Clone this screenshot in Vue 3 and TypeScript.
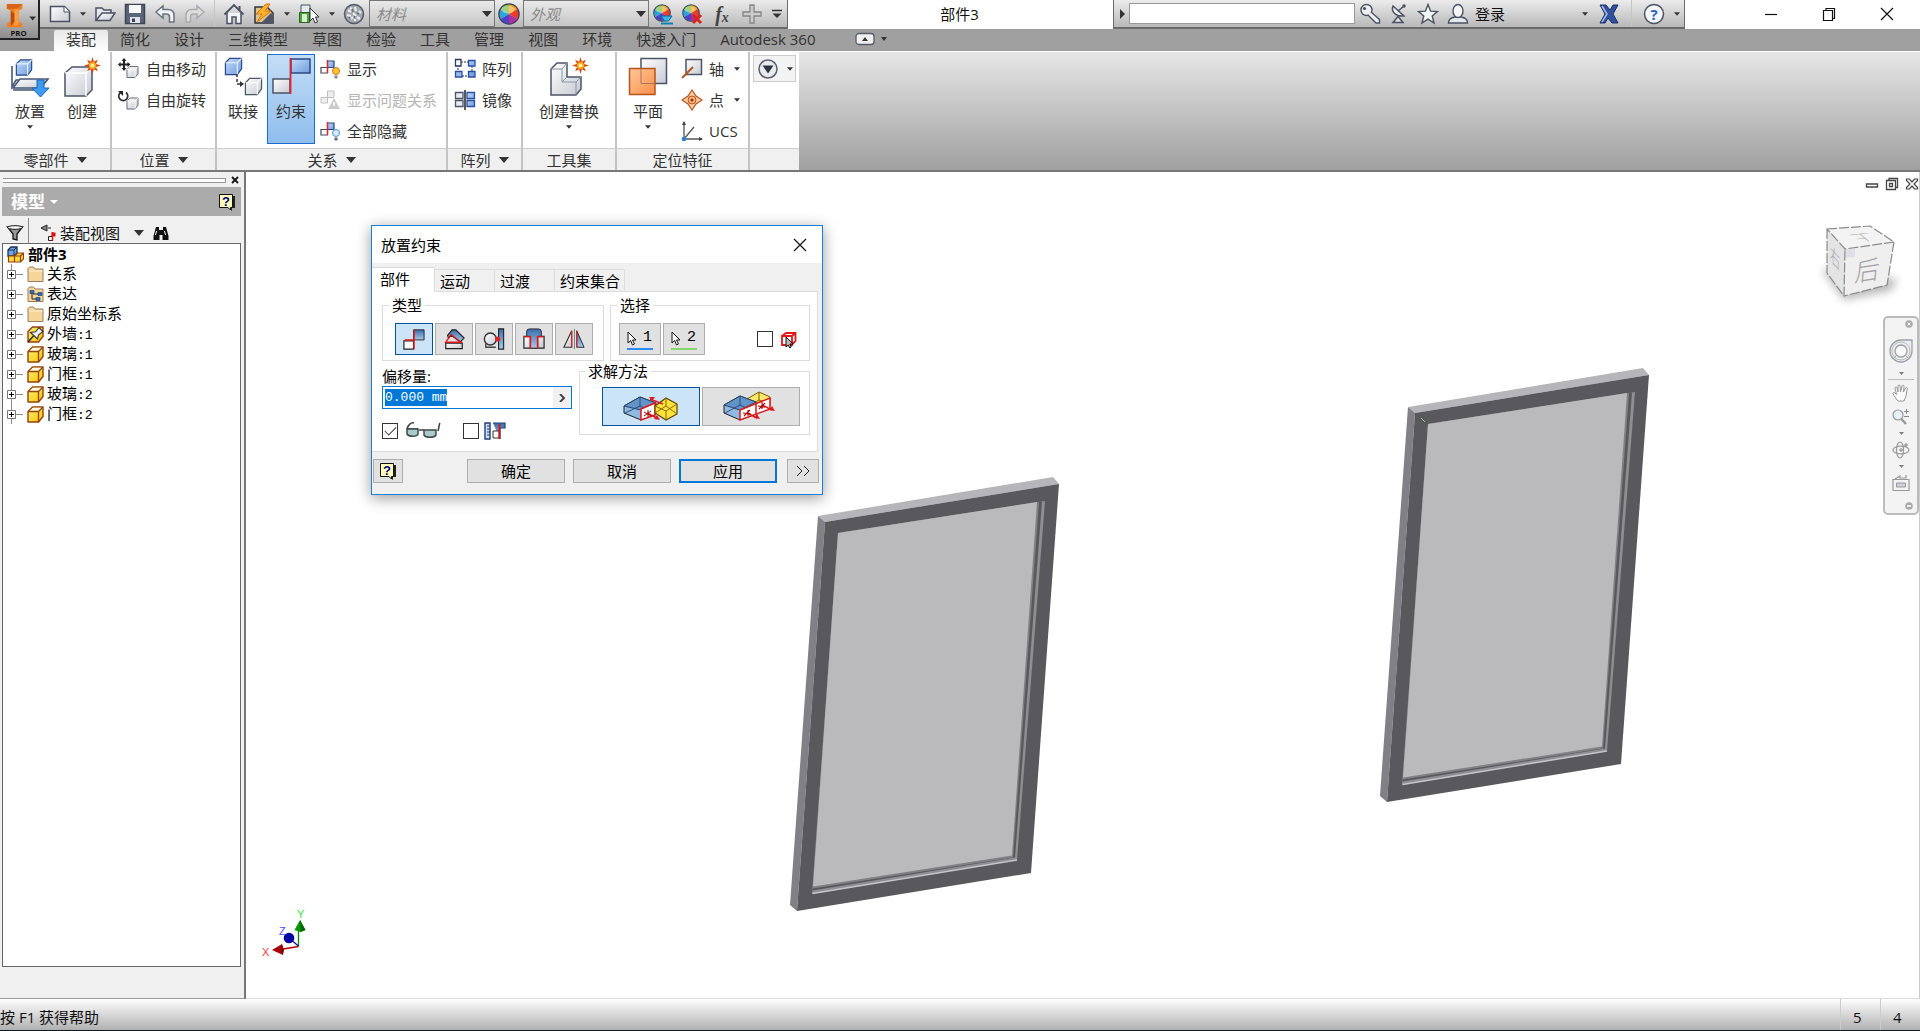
<script setup lang="ts">
import { onMounted, ref } from 'vue'

interface TreeNode { icon: string; name: string; count: string }

const ribbonTabs: string[] = ['装配', '简化', '设计', '三维模型', '草图', '检验', '工具', '管理', '视图', '环境', '快速入门', 'Autodesk 360']
const activeRibbon = ref<string>('装配')

const tree: TreeNode[] = [
  { icon: 'folder', name: '关系', count: '' },
  { icon: 'views', name: '表达', count: '' },
  { icon: 'folder', name: '原始坐标系', count: '' },
  { icon: 'pinned', name: '外墙', count: ':1' },
  { icon: 'part', name: '玻璃', count: ':1' },
  { icon: 'part', name: '门框', count: ':1' },
  { icon: 'part', name: '玻璃', count: ':2' },
  { icon: 'part', name: '门框', count: ':2' },
]

const dialogTabs: string[] = ['部件', '运动', '过渡', '约束集合']
const activeDialogTab = ref<string>('部件')

const types = [
  { id: 'mate', label: '配合' },
  { id: 'angle', label: '角度' },
  { id: 'tangent', label: '相切' },
  { id: 'insert', label: '插入' },
  { id: 'symmetry', label: '对称' },
]
const activeType = ref<string>('mate')
const solution = ref<string>('opposed')
const preview = ref<boolean>(true)
const predict = ref<boolean>(false)
const pickFirst = ref<boolean>(false)
const offset = ref<string>('0.000 mm')
const offsetInput = ref<HTMLInputElement | null>(null)

onMounted(() => {
  offsetInput.value?.focus()
  offsetInput.value?.select()
})
</script>

<template>
  <div class="app">
    <svg class="defs" width="0" height="0" aria-hidden="true">
      <defs>
        <linearGradient id="gb" x1="0" y1="0" x2="1" y2="1"><stop offset="0" stop-color="#c3dcf8" /><stop offset="1" stop-color="#6f9be0" /></linearGradient>
        <linearGradient id="gw" x1="0" y1="0" x2="1" y2="1"><stop offset="0" stop-color="#ffffff" /><stop offset="1" stop-color="#c6cad2" /></linearGradient>
        <linearGradient id="gy" x1="0" y1="0" x2="1" y2="1"><stop offset="0" stop-color="#fff27a" /><stop offset="1" stop-color="#f5c400" /></linearGradient>
        <linearGradient id="go" x1="0" y1="0" x2="1" y2="1"><stop offset="0" stop-color="#ffc79a" /><stop offset="1" stop-color="#f98f48" /></linearGradient>
        <linearGradient id="gd" x1="0" y1="0" x2="0" y2="1"><stop offset="0" stop-color="#3a6dad" /><stop offset="1" stop-color="#a9c9ea" /></linearGradient>
        <symbol id="down" viewBox="0 0 10 6"><path d="M0 0h10L5 6z" fill="#333" /></symbol>
        <symbol id="wheel" viewBox="-10 -10 20 20">
          <path d="M0 0V-9A9 9 0 0 1 7.8-4.5z" fill="#f6a01c" /><path d="M0 0L7.8-4.5A9 9 0 0 1 7.8 4.5z" fill="#ec3b23" />
          <path d="M0 0L7.8 4.5A9 9 0 0 1 0 9z" fill="#b02fa0" /><path d="M0 0V9A9 9 0 0 1-7.8 4.5z" fill="#4a43c8" />
          <path d="M0 0L-7.8 4.5A9 9 0 0 1-7.8-4.5z" fill="#2aa5d8" /><path d="M0 0L-7.8-4.5A9 9 0 0 1 0-9z" fill="#74bb36" />
          <circle r="9.2" fill="none" stroke="#3f4460" stroke-width="1.2" /><ellipse cx="-1" cy="-4" rx="6" ry="3.6" fill="#fff" opacity=".35" />
        </symbol>
        <symbol id="burst" viewBox="-8 -8 16 16">
          <path d="M0-8l1.3 4.5L5-5.5 3.3-1.5 8 0 3.3 1.5 5 5.5 1.3 3.5 0 8l-1.3-4.5L-5 5.5-3.3 1.5-8 0l4.7-1.5L-5-5.5l3.7 2z" fill="#d8480c" /><circle r="3.4" fill="#ffb01c" /><circle r="1.7" fill="#fff6b0" />
        </symbol>
        <symbol id="cubeb" viewBox="0 0 20 20"><path d="M1.5 6L6 1.5h12.5v11L14 18.5H1.5z" fill="url(#gb)" stroke="#2b4a86" stroke-width="1.3" /><path d="M1.5 6H14v12.5M14 6l4.5-4.5" fill="none" stroke="#eaf3ff" stroke-width="1.2" /></symbol>
        <symbol id="cubew" viewBox="0 0 20 20"><path d="M1.5 6L6 1.5h12.5v11L14 18.5H1.5z" fill="url(#gw)" stroke="#4b5468" stroke-width="1.3" /><path d="M1.5 6H14v12.5M14 6l4.5-4.5" fill="none" stroke="#fff" stroke-width="1.2" /></symbol>
        <symbol id="part" viewBox="0 0 17 17"><path d="M1 5.500L5.500 1H16v9.500L11.500 16H1z" fill="url(#gy)" stroke="#93420c" stroke-width="1.4" stroke-linejoin="round" /><path d="M2 5.500L6 1.700h9.300L11.300 5.500z" fill="#fffbe0" /><path d="M1 5.500h10.500V16M11.500 5.500L16 1" fill="none" stroke="#93420c" stroke-width="1.3" /></symbol>
        <symbol id="folder" viewBox="0 0 17 17"><path d="M1 15.500V2.500L2.500 1h4L8 3h8v12.500z" fill="#f6d49a" stroke="#96805a" /><path d="M2 5h13.500" stroke="#fff0cd" /></symbol>
        <symbol id="views" viewBox="0 0 17 17"><path d="M1 15.500V2.500L2.500 1h4L8 3h8v12.500z" fill="#f6d49a" stroke="#96805a" /><path d="M5 7v6h4M6 8h6" stroke="#222" fill="none" /><path d="M3 4.500h4v3H3zM11 6.500h4v3h-4zM9 11.500h4v3H9z" fill="#2b6cb8" stroke="#12386b" stroke-width=".6" /></symbol>
        <symbol id="pinned" viewBox="0 0 17 17"><path d="M1 5.500L5.500 1H16v9.500L11.500 16H1z" fill="url(#gy)" stroke="#93420c" stroke-width="1.4" /><path d="M1 16l5.500-6" stroke="#222" stroke-width="1.400" /><path d="M3.500 6.500l7 6.500 1-4 4.500-3.500L12 1.500 8.500 5.800z" fill="#f0f0f0" stroke="#333" stroke-width="1.100" /></symbol>
        <symbol id="flag" viewBox="0 0 22 22"><path d="M8.500 3H15v6.500H8.500z" fill="url(#gb)" stroke="#2b4a86" stroke-width="1.200" /><path d="M2 9.500h6.500V15H2z" fill="#fff" stroke="#414a60" stroke-width="1.200" /><path d="M8.500 2v13" stroke="#e22" stroke-width="1.400" /></symbol>
        <symbol id="help" viewBox="0 0 18 18"><path d="M3 3h14v12h-3v3l-3-3H3z" fill="#222" /><path d="M1.500 1.500h13v13h-2v2.500l-2.500-2.500H1.500z" fill="#ffffb8" stroke="#111" /><text x="8" y="13" text-anchor="middle" font-family="Liberation Sans, sans-serif" font-size="13" font-weight="700" fill="#00008b">?</text></symbol>
        <symbol id="cursor" viewBox="0 0 10 15"><path d="M1 1v11l2.700-2.500L5.500 14l2-1-2-4H9z" fill="#fff" stroke="#111" /></symbol>
        <symbol id="mate" viewBox="0 0 24 24"><path d="M11.500 2H23v11H11.500z" fill="url(#gd)" stroke="#222" /><path d="M1 14h10.500v9H1z" fill="#fff" stroke="#222" stroke-width="1.300" /><path d="M12 2v21M12 13H2" stroke="#e01818" stroke-width="1.600" /></symbol>
        <symbol id="angle" viewBox="0 0 24 24"><path d="M3 16.500h18v6H3z" fill="url(#gw)" stroke="#222" stroke-width="1.300" /><path d="M5 8l5-6h4l9 9-4 4L9 8l-3 3z" fill="url(#gd)" stroke="#222" stroke-width="1.300" /><path d="M9 7L3 15.500h18" fill="none" stroke="#e01818" stroke-width="1.500" /><path d="M9 7l9 8" stroke="#e01818" stroke-width="1.400" /></symbol>
        <symbol id="tangent" viewBox="0 0 24 24"><path d="M17 1h5.500v22H17z" fill="url(#gd)" stroke="#222" stroke-width="1.200" /><path d="M3 17v4h11" fill="none" stroke="#444" stroke-width="1.500" /><circle cx="8" cy="12" r="6.500" fill="url(#gw)" stroke="#333" stroke-width="1.500" /><circle cx="16" cy="12" r="2.800" fill="#e62020" /></symbol>
        <symbol id="insert" viewBox="0 0 24 24"><path d="M1 9h22v13H1z" fill="url(#gw)" stroke="#222" stroke-width="1.300" /><path d="M4 4q0-3 3-3h10q3 0 3 3v5h-4v13H8V9H4z" fill="url(#gd)" stroke="#222" /><path d="M2 9.500h6V22M22 9.500h-6V22" fill="none" stroke="#e01818" stroke-width="1.800" /></symbol>
        <symbol id="symmetry" viewBox="0 0 24 24"><path d="M9.500 3v18H1z" fill="url(#gw)" stroke="#333" stroke-width="1.200" /><path d="M15 3v18h8z" fill="url(#gd)" stroke="#222" /><path d="M12.500 1v22" stroke="#777" /><path d="M9.500 3v18M15 3v18" stroke="#d22" stroke-width="1.200" /></symbol>
        <symbol id="opposed" viewBox="0 0 56 32"><path d="M1 15l16-9 16 6v11L18 29 1 22z" fill="#8fb8e2" stroke="#222" /><path d="M1 15l16-9 16 6-15 7z" fill="#6493c8" stroke="#24476f" /><path d="M17 6v9l-15 7M17 15l15 7" fill="none" stroke="#24476f" stroke-width=".9" /><path d="M18 18l14-6v12l-14 5z" fill="#fff" stroke="#e01818" stroke-width="1.500" /><path d="M32 15l11-8 11 6v10l-11 6-11-7z" fill="#ffe23c" stroke="#5a4300" stroke-width="1.200" /><path d="M32 15l11 5 11-7M43 20v9M43 7v8l-11 7M43 15l11 8" stroke="#8a6a00" fill="none" /><path d="M24 22l10 5M40 13l-13-5" stroke="#e01818" stroke-width="1.400" /><path d="M37 29l-6-1 3-4zM26 6l6 0-3 4z" fill="#e01818" /><path d="M21 21l7 4M28 20l-7 5M25 19v7" stroke="#a00" /></symbol>
        <symbol id="aligned" viewBox="0 0 56 32"><path d="M24 8l12-7 11 5v9l-13 4-10-6z" fill="#ffe86a" stroke="#7a5b00" /><path d="M36 1v8l11 5M36 9l-9 5" fill="none" stroke="#7a5b00" /><path d="M1 14l16-9 16 6v12L17 29 1 22z" fill="#8fb8e2" stroke="#222" /><path d="M1 14l16-9 16 6-16 8z" fill="#6493c8" stroke="#24476f" /><path d="M17 5v9L2 22M17 14l15 7" fill="none" stroke="#24476f" stroke-width=".9" /><path d="M17 19l30-12v11L17 29z" fill="#fff" stroke="#e01818" stroke-width="1.500" /><path d="M33 13v11M24 22l10 5M39 14l10 5" stroke="#e01818" stroke-width="1.500" /><path d="M37 28l-6-1 3-4zM52 20l-6-1 3-4z" fill="#e01818" /><path d="M20 22l8 1M27 19l-6 6M25 19v6M35 15l7 1M42 12l-6 6M39 11v7" stroke="#a00" stroke-width="1.100" /></symbol>
      </defs>
    </svg>

    <header class="top">
      <button class="app-button" aria-label="应用程序菜单">
        <svg class="logo" viewBox="0 0 39 39">
          <path d="M8 4h15v5l-4 2v11l4 2v4H7v-4l4-2V11L7 9z" fill="#f08023" /><path d="M11 11l4 3v8l-4 5z" fill="#b84d10" /><path d="M15 9h4v16l-4 2z" fill="#ff9d3f" /><path d="M7 4h16l-5 5H7z" fill="#d4651a" />
          <path d="M30 17h7l-3.500 4z" fill="#333" /><text x="19" y="37" text-anchor="middle" font-family="Open Sans, sans-serif" font-size="8" font-weight="700" fill="#111">PRO</text>
        </svg>
      </button>
      <div class="top-main">
        <div class="titlebar">
          <div class="qat">
            <button class="w30" aria-label="新建"><svg class="i22" viewBox="0 0 22 22"><path d="M1.500 3.500h14l5 5v10h-19z" fill="url(#gw)" stroke="#4a5264" stroke-width="1.500" /><path d="M15 3.500V9h5.500" fill="#fff" stroke="#4a5264" /></svg></button>
            <button class="w15" aria-label="新建选项"><svg class="arrow small"><use href="#down" /></svg></button>
            <button class="w30" aria-label="打开"><svg class="i22" viewBox="0 0 22 22"><path d="M2 17V5h6l2 2h7v3" fill="#e4e7ec" stroke="#4a5264" stroke-width="1.500" /><path d="M2 17.500L8 10h13l-5 7.500z" fill="url(#gw)" stroke="#4a5264" stroke-width="1.500" /></svg></button>
            <button class="w30" aria-label="保存"><svg class="i22" viewBox="0 0 22 22"><path d="M1.500 1.500h19v19h-19z" fill="#5a6478" stroke="#3d4454" stroke-width="1.500" /><path d="M5 2h12v8H5z" fill="#f6f7f9" /><path d="M6 14h10v6H6z" fill="#dfe2e8" /><path d="M8 15.500h3V19H8z" fill="#3d4454" /></svg></button>
            <button class="w30" aria-label="撤消"><svg class="i22" viewBox="0 0 22 22"><path d="M2 9l7-6v3.500h5c4 0 6 2.500 6 6V19h-4.500v-5c0-2-1-3-3-3H9v4z" fill="#f3f4f6" stroke="#6a7180" stroke-width="1.500" /></svg></button>
            <button class="w30" aria-label="重做"><svg class="i22" viewBox="0 0 22 22"><path d="M20 9l-7-6v3.500H8c-4 0-6 2.500-6 6V19h4.500v-5c0-2 1-3 3-3H13v4z" fill="#ddd" stroke="#a8abb0" stroke-width="1.500" /></svg></button>
            <span class="sep"></span>
            <button class="w30" aria-label="主视图"><svg class="i22" viewBox="0 0 22 22"><path d="M4 10v10.500h5V14h4v6.500h5V10" fill="#f2f3f5" stroke="#4a5264" stroke-width="1.500" /><path d="M1.500 11.500L11 2l9.500 9.500" fill="none" stroke="#4a5264" stroke-width="1.800" /><path d="M16.500 3v4" stroke="#4a5264" stroke-width="2" /></svg></button>
            <button class="w30" aria-label="更新"><svg class="i22" viewBox="0 0 22 22"><path d="M2 4h12l6 6v10H2z" fill="#d9c48c" stroke="#30343f" stroke-width="1.500" /><path d="M8 20l10-10 2 2v8z" fill="#4f5565" /><path d="M13 1L3 11h6l-5 8L18 8h-6l5-7z" fill="#ffb52b" stroke="#e0700c" /></svg></button>
            <button class="w15" aria-label="更新选项"><svg class="arrow small"><use href="#down" /></svg></button>
            <button class="w30" aria-label="选择"><svg class="i22" viewBox="0 0 22 22"><path d="M3 2h9v8H3z" fill="#e6e9ed" stroke="#4a5264" /><path d="M1.500 9.500h10v10h-10z" fill="#4aa43a" stroke="#25601c" /><path d="M4 11h5v8H4z" fill="#d7f0d0" /><path d="M12 5v13l3-3 2 5 2.500-1-2-5H21z" fill="#fff" stroke="#333" /></svg></button>
            <button class="w15" aria-label="选择选项"><svg class="arrow small"><use href="#down" /></svg></button>
            <button class="w30" aria-label="材料浏览器"><svg class="i22" viewBox="0 0 22 22"><circle cx="11" cy="11" r="9.500" fill="#a4a8b0" stroke="#555b68" stroke-width="1.500" /><path d="M5 7l3 2M12 4l1 4M16 8l2 2M4 12l4 1M10 10l3 3M8 16l2-2M14 14l3 2M7 5l2 1M12 18v-2" stroke="#eee" stroke-width="2.200" /><path d="M9 6l1 3M14 10l2 1M6 14l1 2M12 13l-1 2" stroke="#6a707c" stroke-width="1.500" /></svg></button>
            <span class="combo"><select aria-label="材料"><option>材料</option></select><svg class="arrow"><use href="#down" /></svg></span>
            <button class="w28" aria-label="外观浏览器"><svg class="i22"><use href="#wheel" /></svg></button>
            <span class="combo"><select aria-label="外观"><option>外观</option></select><svg class="arrow"><use href="#down" /></svg></span>
            <button class="w28" aria-label="调整外观"><svg class="i22" viewBox="0 0 22 22"><use href="#wheel" x="1" y="1" width="18" height="18" /><path d="M9 13h11l-3.500 5h-4z" fill="#38b5e6" stroke="#086a94" /><path d="M9 20.500h12" stroke="#0a84b8" stroke-width="2" /></svg></button>
            <button class="w30" aria-label="清除外观"><svg class="i22" viewBox="0 0 22 22"><use href="#wheel" x="1" y="1" width="18" height="18" /><path d="M12 12l8 8M20 12l-8 8" stroke="#d8241c" stroke-width="3" /></svg></button>
            <button class="w30 fx" aria-label="参数"><i>f</i><i class="fx-x">x</i></button>
            <button class="w30" aria-label="添加"><svg class="i22" viewBox="0 0 22 22"><path d="M9 2h4v7h7v4h-7v7H9v-7H2V9h7z" fill="#ccc" stroke="#858585" stroke-width="1.300" /></svg></button>
            <button class="w20" aria-label="自定义"><svg class="i12" viewBox="0 0 12 12"><path d="M1 2.500h10" stroke="#333" stroke-width="1.500" /><path d="M1.500 5.500h9L6 10z" fill="#333" /></svg></button>
          </div>
          <h1 class="doc-title">部件3</h1>
          <div class="infobar">
            <button class="w15" aria-label="展开搜索"><svg class="i12" viewBox="0 0 12 12"><path d="M4 1v10l5-5z" fill="#333" /></svg></button>
            <input class="search" type="text" aria-label="搜索" />
            <button class="w30" aria-label="搜索"><svg class="i22" viewBox="0 0 22 22"><circle cx="7.500" cy="7" r="5.500" fill="#eef0f3" stroke="#4a5264" stroke-width="1.400" /><circle cx="5.500" cy="5.500" r="1.600" fill="#4a5264" /><path d="M9 12l8 8h3.500v-3.500L12 9" fill="#eef0f3" stroke="#4a5264" stroke-width="1.400" /></svg></button>
            <button class="w28" aria-label="通讯中心"><svg class="i22" viewBox="0 0 22 22"><path d="M5 3c-2 5 2 11 11 10z" fill="#eef0f3" stroke="#4a5264" stroke-width="1.500" /><path d="M10 8l6-5M5 19.500l5-6 5 6z" fill="#dde0e5" stroke="#4a5264" stroke-width="1.500" /><circle cx="16" cy="3" r="1.800" fill="#4a5264" /></svg></button>
            <button class="w30" aria-label="收藏夹"><svg class="i22" viewBox="0 0 22 22"><path d="M11 1.500l2.600 6.700 6.900.4-5.300 4.400 1.800 7L11 16.200 5 20l1.800-7L1.500 8.600l6.900-.4z" fill="#f4f5f7" stroke="#4a5264" stroke-width="1.400" /></svg></button>
            <button class="login"><svg class="i22" viewBox="0 0 22 22"><path d="M1.500 20c0-4 3-5.500 6.500-6h6c3.500.5 6.500 2 6.500 6z" fill="#e4e7eb" stroke="#4a5264" stroke-width="1.400" /><ellipse cx="11" cy="8" rx="5" ry="6.500" fill="#f4f5f7" stroke="#4a5264" stroke-width="1.400" /></svg><span>登录</span><svg class="arrow small"><use href="#down" /></svg></button>
            <button class="w30" aria-label="Exchange"><svg class="i22" viewBox="0 0 22 22"><path d="M2 2h6l4 5 3-5h5l-5 9 5 9h-6l-4-5-3 5H2l5-9z" fill="#2f4fa0" stroke="#1d2f66" /><path d="M4 3l5 8-5 8" fill="none" stroke="#a9bce6" stroke-width="1.500" /></svg></button>
            <span class="sep wide-sep"></span>
            <button class="w30" aria-label="帮助"><svg class="i22" viewBox="0 0 22 22"><circle cx="11" cy="11" r="9.500" fill="#f3f6fb" stroke="#4a5264" stroke-width="1.500" /><text x="11" y="16.500" text-anchor="middle" font-family="Open Sans, sans-serif" font-size="15" font-weight="700" fill="#2c62c4">?</text></svg></button>
            <button class="w15" aria-label="帮助选项"><svg class="arrow small"><use href="#down" /></svg></button>
          </div>
          <div class="window-buttons">
            <button aria-label="最小化"><svg class="i14" viewBox="0 0 14 14"><path d="M1 7.500h12" stroke="#111" stroke-width="1.200" /></svg></button>
            <button aria-label="还原"><svg class="i14" viewBox="0 0 14 14"><path d="M1.500 3.500h9v10h-9zM4 3.500v-2h8.500v10h-2" fill="none" stroke="#111" stroke-width="1.200" /></svg></button>
            <button aria-label="关闭"><svg class="i14" viewBox="0 0 14 14"><path d="M1 1l12 12M13 1L1 13" stroke="#111" stroke-width="1.200" /></svg></button>
          </div>
        </div>
        <nav class="ribbon-tabs">
          <button v-for="t in ribbonTabs" :key="t" :class="{ active: t === activeRibbon }" @click="activeRibbon = t">{{ t }}</button>
          <button class="pill-tab" aria-label="最小化功能区"><svg class="pill" viewBox="0 0 34 14"><rect x="1" y="1.500" width="18" height="11" rx="3" fill="#f0f0f0" stroke="#555b68" stroke-width="1.300" /><path d="M7 9h6l-3-4zM26 5h6l-3 4z" fill="#333" /></svg></button>
        </nav>
      </div>
    </header>

    <section class="ribbon">
      <div class="group g-parts">
        <div class="group-body">
          <button class="big"><svg class="i40" viewBox="0 0 40 40"><path d="M2 9v21l4-7h31l-8 10H3" fill="#dfe3ea" stroke="#4a5876" stroke-width="1.600" /><path d="M3 31l7-9h28l-8 9z" fill="url(#gw)" stroke="#4a5876" stroke-width="1.500" /><use href="#cubeb" x="5" y="1" width="18" height="19" /><path d="M27 23h7v8h5l-8.500 9L22 31h5z" fill="#3f9bf0" stroke="#1866b8" /></svg><span>放置</span><svg class="arrow small"><use href="#down" /></svg></button>
          <button class="big"><svg class="i40" viewBox="0 0 40 40"><path d="M3 16l7-6h20v23l-6 6H3z" fill="url(#gw)" stroke="#4b5468" stroke-width="1.500" /><path d="M3 16h21v23M24 16l6-6" fill="none" stroke="#fff" stroke-width="1.500" /><use href="#burst" x="22" y="0" width="17" height="17" /></svg><span>创建</span></button>
        </div>
        <div class="group-title">零部件<svg class="arrow"><use href="#down" /></svg></div>
      </div>
      <div class="group g-position">
        <div class="group-body">
          <div class="stack">
            <button><svg class="i22" viewBox="0 0 22 22"><use href="#cubew" x="8" y="7" width="13" height="14" /><path d="M6 0l2.500 3H7v2.500h2.500V4l3 2.500-3 2.500V7.500H7V10h1.500L6 13l-2.500-3H5V7.500H2.500V9L0 6.500 2.500 4v1.500H5V3H3.500z" fill="#222" /></svg>自由移动</button>
            <button><svg class="i22" viewBox="0 0 22 22"><use href="#cubew" x="8" y="8" width="13" height="13" /><path d="M2.500 3.500A4.500 4.500 0 1 0 8 3.500" fill="none" stroke="#333" stroke-width="1.700" /><path d="M0 2h5v5z" fill="#222" /></svg>自由旋转</button>
          </div>
        </div>
        <div class="group-title">位置<svg class="arrow"><use href="#down" /></svg></div>
      </div>
      <div class="group g-relation">
        <div class="group-body">
          <button class="big joint"><svg class="i40" viewBox="0 0 40 40"><use href="#cubeb" x="1" y="0" width="19" height="19" /><use href="#cubew" x="21" y="20" width="19" height="19" /><path d="M14 17v10h5" fill="none" stroke="#333" stroke-width="1.500" stroke-dasharray="3 2" /><path d="M17 24l4 3-4 3z" fill="#333" /></svg><span>联接</span></button>
          <button class="big joint pressed"><svg class="i40" viewBox="0 0 40 40"><path d="M20 2h19v14H20z" fill="url(#gb)" stroke="#2b4a86" stroke-width="1.500" /><path d="M2 22h17v14H2z" fill="url(#gw)" stroke="#4b5468" stroke-width="1.500" /><path d="M19.500 1v36" stroke="#e5202a" stroke-width="1.800" /></svg><span>约束</span></button>
          <div class="stack">
            <button><svg class="i22" viewBox="0 0 22 22"><use href="#flag" /><circle cx="17" cy="13" r="3.500" fill="#ffc23a" stroke="#d07a10" /><path d="M15.500 17.500h3v3h-3z" fill="#888" /></svg>显示</button>
            <button disabled><svg class="i22 faded" viewBox="0 0 22 22"><path d="M8.500 2H15v6.500H8.500zM2 8.500h6.500V14H2z" fill="#e4e4e4" stroke="#999" /><path d="M15 9l6 11H9z" fill="#aaa" /><path d="M15 13v4" stroke="#fff" stroke-width="1.500" /></svg>显示问题关系</button>
            <button><svg class="i22" viewBox="0 0 22 22"><use href="#flag" /><circle cx="17" cy="13" r="3.500" fill="#d4eaff" stroke="#5b94cc" /><path d="M15.500 17.500h3v3h-3z" fill="#667" /></svg>全部隐藏</button>
          </div>
        </div>
        <div class="group-title">关系<svg class="arrow"><use href="#down" /></svg></div>
      </div>
      <div class="group g-pattern">
        <div class="group-body">
          <div class="stack">
            <button><svg class="i22" viewBox="0 0 22 22"><path d="M4 4h14v14H4z" fill="none" stroke="#333" stroke-dasharray="2 1" /><path d="M1.500 1.500H7V8H1.500z" fill="#fff" stroke="#2b3a60" stroke-width="1.300" /><path d="M14.500 2.500H21V8h-6.500zM1.500 13.500H8V19H1.500zM14.500 13.500H21V19h-6.500z" fill="url(#gb)" stroke="#2b4fa0" stroke-width="1.300" /></svg>阵列</button>
            <button><svg class="i22" viewBox="0 0 22 22"><path d="M1.500 3.500H9v6H1.500zM1.500 11.500H9v6H1.500z" fill="#e8ebf0" stroke="#4b5468" stroke-width="1.300" /><path d="M13 3.500h7.500v6H13zM13 11.500h7.500v6H13z" fill="url(#gb)" stroke="#2b4fa0" stroke-width="1.300" /><path d="M11 1v20" stroke="#222" stroke-width="1.500" /></svg>镜像</button>
          </div>
        </div>
        <div class="group-title">阵列<svg class="arrow"><use href="#down" /></svg></div>
      </div>
      <div class="group g-tools">
        <div class="group-body center">
          <button class="big wide"><svg class="i40" viewBox="0 0 40 40"><path d="M2 12l6-6h10v14h14v12l-5 6H2z" fill="url(#gw)" stroke="#4b5468" stroke-width="1.500" /><path d="M2 12h11v13h14v13M13 12l5-6M13 25l5-5M27 25l5-5" fill="none" stroke="#8b93a4" /><use href="#burst" x="23" y="0" width="17" height="17" /></svg><span>创建替换</span><svg class="arrow small"><use href="#down" /></svg></button>
        </div>
        <div class="group-title">工具集</div>
      </div>
      <div class="group g-work">
        <div class="group-body">
          <button class="big plane"><svg class="i40" viewBox="0 0 40 40"><path d="M13 1.500h25.500v25H13z" fill="url(#gw)" stroke="#4b5468" stroke-width="1.500" /><path d="M1.500 11.500h25.500v26H1.500z" fill="url(#go)" stroke="#b5551c" stroke-width="1.500" /><path d="M13 11.500v15h14" fill="none" stroke="#a9745a" /></svg><span>平面</span><svg class="arrow small"><use href="#down" /></svg></button>
          <div class="stack">
            <button><svg class="i22" viewBox="0 0 22 22"><path d="M5 1.500h15.500v15H5z" fill="url(#gw)" stroke="#4b5468" stroke-width="1.500" /><path d="M1 20L12 9" stroke="#b5551c" stroke-width="2" /></svg>轴<svg class="arrow small after"><use href="#down" /></svg></button>
            <button><svg class="i22" viewBox="0 0 22 22"><path d="M11 1l4 6 6 4-6 4-4 6-4-6-6-4 6-4z" fill="#ffd0a4" stroke="#b5551c" stroke-width="1.200" /><circle cx="11" cy="11" r="4" fill="#fbb27c" stroke="#b5551c" /><circle cx="11" cy="11" r="1.500" fill="#803610" /></svg>点<svg class="arrow small after"><use href="#down" /></svg></button>
            <button><svg class="i22" viewBox="0 0 22 22"><path d="M3 2v17h18M3 19L13 7" fill="none" stroke="#555" stroke-width="1.300" /><path d="M1 5l2-4 2 4zM18 17l4 2-4 2z" fill="#444" /><circle cx="3" cy="19" r="2.300" fill="#2d7fd8" /></svg>UCS</button>
          </div>
        </div>
        <div class="group-title">定位特征</div>
      </div>
      <div class="group g-more">
        <div class="group-body">
          <button class="more" aria-label="更多"><svg class="i22" viewBox="0 0 22 22"><circle cx="11" cy="11" r="9" fill="#e9ebef" stroke="#5a6070" stroke-width="1.500" /><path d="M5.500 7.500h11L11 15.500z" fill="#2d3440" /></svg><svg class="arrow small"><use href="#down" /></svg></button>
        </div>
        <div class="group-title"></div>
      </div>
    </section>

    <main class="work">
      <aside class="browser">
        <div class="grip-row"><span class="grip"></span><button aria-label="关闭浏览器"><svg class="i8" viewBox="0 0 8 8"><path d="M1 1l6 6M7 1L1 7" stroke="#111" stroke-width="1.800" /></svg></button></div>
        <div class="browser-head"><button class="model">模型<svg class="i8" viewBox="0 0 8 8"><path d="M0 2h8L4 6z" fill="#fff" /></svg></button><button aria-label="浏览器帮助"><svg class="i18"><use href="#help" /></svg></button></div>
        <div class="browser-tools">
          <button class="filter" aria-label="过滤器"><svg class="i18" viewBox="0 0 18 18"><path d="M1.500 3h15L11 10v6l-4-1v-5z" fill="#999" stroke="#111" stroke-width="1.300" /><ellipse cx="9" cy="3.500" rx="7.500" ry="1.800" fill="#fff" stroke="#111" /></svg></button>
          <button class="view-select"><svg class="i18" viewBox="0 0 18 18"><path d="M1 4l6-3v6zM8 4h3" fill="#888" stroke="#222" /><path d="M11.500 8.500h4v4h-4z" fill="#d11" /><path d="M8.500 12.500h4v4h-4z" fill="#fff" stroke="#222" /><path d="M12.500 8v9" stroke="#d11" stroke-width="1.500" /></svg>装配视图<svg class="arrow"><use href="#down" /></svg></button>
          <button aria-label="查找"><svg class="i18" viewBox="0 0 18 18"><path d="M4 3h3v3h4V3h3l2.500 9v4h-6v-5h-3v5h-6v-4z" fill="#111" /><path d="M3.500 11l1-4M13.500 11l-1-4" stroke="#fff" /></svg></button>
        </div>
        <div class="tree">
          <div class="root"><svg class="i17" viewBox="0 0 17 17"><path d="M1 4l3-3h6v6L7 10H1z" fill="#6fa5e0" stroke="#16305c" stroke-width="1.300" /><path d="M1 4h6v6M7 4l3-3" fill="none" stroke="#16305c" /><path d="M1.500 10h6v6h-6zM7.500 10l3-3h6v6l-3 3h-6zM7.500 10h6v6M13.500 10l3-3" fill="#ffd83a" stroke="#93420c" stroke-width="1.200" /></svg><b>部件3</b></div>
          <ul>
            <li v-for="(n, i) in tree" :key="i">
              <button class="expander" :aria-label="'展开 ' + n.name"><svg viewBox="0 0 18 20"><path d="M6.500 0v20M11 10.500h7" stroke="#8a8a8a" /><path d="M2.500 6.500h8v8h-8z" fill="#fff" stroke="#777" /><path d="M4 10.500h5M6.500 8v5" stroke="#000" /></svg></button>
              <svg class="i17"><use :href="'#' + n.icon" /></svg>
              <span class="node">{{ n.name }}<span class="count">{{ n.count }}</span></span>
            </li>
          </ul>
        </div>
      </aside>

      <section class="viewport">
        <svg class="scene" aria-hidden="true">
          <defs>
            <g id="door">
              <path d="M818 516L1053 477l6 7-234 38z" fill="#b6b6ba" />
              <path d="M818 516l7 6-28 389-7-6z" fill="#808086" />
              <path d="M825 522l234-38-28 389-234 38z" fill="#59595d" />
              <path d="M838 533l207-32-28 359-205 34z" fill="#8e8e93" />
              <path d="M838 533l204-31.500-27 356-202.500 33z" fill="#59595d" />
              <path d="M838 533l201-31-26 355.500-200.500 31z" fill="#808085" />
              <path d="M838 533l199-31-25 353.500L813 886.500z" fill="#bababc" />
              <path d="M812.500 893.500L1017 860" stroke="#c5c5c8" stroke-width="1.500" />
            </g>
          </defs>
          <g transform="translate(-246 -172)"><use href="#door" /><use href="#door" transform="translate(590 -109)" /><path d="M1421 418l4 4" stroke="#86d878" stroke-width="1" /></g>
        </svg>

        <div class="mdi">
          <button aria-label="最小化文档"><svg class="i14" viewBox="0 0 14 14"><path d="M1.500 7h11v3h-11z" fill="#fff" stroke="#444" stroke-width="1.300" /></svg></button>
          <button aria-label="还原文档"><svg class="i14" viewBox="0 0 14 14"><path d="M4 3.500v-2h8.500v9h-2" fill="none" stroke="#444" stroke-width="1.300" /><path d="M1.500 3.500h9v9h-9zM4.500 6.500h3v3h-3z" fill="#fff" stroke="#444" stroke-width="1.300" /></svg></button>
          <button aria-label="关闭文档"><svg class="i14" viewBox="0 0 14 14"><path d="M1.500 2h3L7 5l2.500-3h3v1.500L9 7l3.500 3.500V12h-3L7 9l-2.500 3h-3v-1.500L5 7 1.500 3.500z" fill="#fff" stroke="#444" stroke-width="1.200" /></svg></button>
        </div>

        <svg class="viewcube" viewBox="0 0 90 90">
          <defs><filter id="soft" x="-30%" y="-30%" width="160%" height="160%"><feGaussianBlur stdDeviation="4" /></filter></defs>
          <path d="M4 50l22 30 46-9 8-10-40-14z" fill="#8c8c8c" opacity=".6" filter="url(#soft)" />
          <path d="M9 9l43-3 24 16-49 7z" fill="#f3f3f3" /><path d="M9 9l18 20-1 47L9 53z" fill="#e4e4e4" /><path d="M27 29l49-7-7 43-43 11z" fill="#efefef" />
          <path d="M27 29h10v8l-10 1z" fill="#dde1e7" />
          <path d="M9 9l43-3 24 16-49 7zM9 9v44l17 23 1-47M76 22l-7 43-43 11" fill="none" stroke="#8b8b8b" stroke-width="1.200" stroke-dasharray="10 2" />
          <text transform="matrix(.95 -.14 -.1 1 36 62)" font-family="Noto Sans CJK SC, sans-serif" font-size="26" font-weight="300" fill="#a2a2a4">后</text>
          <text transform="matrix(.5 .55 0 1 12 40)" font-family="Noto Sans CJK SC, sans-serif" font-size="20" font-weight="300" fill="#a8a8aa">右</text>
          <text transform="matrix(-.9 .1 -.5 -.4 51 13)" font-family="Noto Sans CJK SC, sans-serif" font-size="22" font-weight="300" fill="#a8a8aa">上</text>
        </svg>

        <div class="navbar">
          <button class="nav-end" aria-label="关闭导航栏"><svg class="i8" viewBox="0 0 8 8"><circle cx="4" cy="4" r="3.800" fill="#aaa" /><path d="M2.500 2.500l3 3M5.500 2.500l-3 3" stroke="#fff" /></svg></button>
          <button class="nav-wheel" aria-label="控制盘"><svg class="i24" viewBox="0 0 24 24"><path d="M12 1h11v11A11 11 0 1 1 12 1z" fill="#e9ecf0" stroke="#9ca0a6" stroke-width="1.300" /><circle cx="12" cy="12" r="9" fill="none" stroke="#bbb" /><circle cx="12" cy="12" r="6" fill="#f8f8f8" stroke="#9ca0a6" stroke-width="1.300" /><path d="M8 16l-3 3M16 16l3 3" stroke="#aaa" /></svg><svg class="arrow tiny"><use href="#down" /></svg></button>
          <hr />
          <button aria-label="平移"><svg class="i18" viewBox="0 0 18 18"><path d="M5 16l-4-6c-.5-1.500 1-2 2-1l1.500 1.500L3 4c0-1.500 1.700-1.500 2 0l1 4V2c.2-1.500 1.800-1.500 2 0l.5 6L10 2c.3-1.400 2-1 2 .4L11.500 8l2-4c.7-1 2-.5 1.800.8L14 12l-2 5H6z" fill="#fafafa" stroke="#999" /></svg></button>
          <button aria-label="缩放"><svg class="i18" viewBox="0 0 18 18"><circle cx="6" cy="7" r="5" fill="#e6f0f6" stroke="#999" stroke-width="1.200" /><path d="M9.500 11l4.500 5" stroke="#999" stroke-width="2.500" /><path d="M12 3.500h5M14.500 1v5M12 8.500h5" stroke="#888" /></svg><svg class="arrow tiny"><use href="#down" /></svg></button>
          <button aria-label="动态观察"><svg class="i18" viewBox="0 0 18 18"><ellipse cx="9" cy="9" rx="8" ry="3.800" fill="none" stroke="#999" stroke-width="1.200" /><ellipse cx="8" cy="9" rx="3.500" ry="8" fill="none" stroke="#999" stroke-width="1.200" /><path d="M7 9h4M9 7v4M12 4h4M14 2v4" stroke="#888" /></svg><svg class="arrow tiny"><use href="#down" /></svg></button>
          <button aria-label="观察方向"><svg class="i18" viewBox="0 0 18 18"><path d="M1 5.500h16v11H1z" fill="#f4f4f4" stroke="#999" stroke-width="1.200" /><path d="M4.500 9h9v4h-9z" fill="#ccd2da" stroke="#999" /><path d="M3 5l5-3v2h6V1" fill="none" stroke="#999" stroke-width="1.200" /></svg></button>
          <button class="nav-end" aria-label="导航栏选项"><svg class="i8" viewBox="0 0 8 8"><circle cx="4" cy="4" r="3.800" fill="#aaa" /><path d="M2 4h4" stroke="#fff" stroke-width="1.500" /></svg></button>
        </div>

        <svg class="triad" viewBox="0 0 48 56">
          <path d="M36.500 41.500L21 44" stroke="#b00" stroke-width="1.300" /><path d="M36.500 41V25" stroke="#080" stroke-width="1.300" /><path d="M36.500 41L28 34" stroke="#00b" stroke-width="1.200" />
          <path d="M10 45l10-6 1 11z" fill="#a80000" /><path d="M20 39l2 6-1 5-2-4z" fill="#700" /><path d="M38 15l5.500 10-5 2-6-2z" fill="#009a00" /><path d="M38 15l5.500 10-5 2z" fill="#006a00" /><circle cx="27" cy="33" r="5.300" fill="#0000a4" />
          <text x="0" y="51" font-family="Liberation Sans, sans-serif" font-size="11" fill="#f04040">X</text>
          <text x="17" y="30" font-family="Liberation Sans, sans-serif" font-size="11" fill="#5050f0">Z</text>
          <text x="35" y="13" font-family="Liberation Sans, sans-serif" font-size="11" fill="#40e040">Y</text>
        </svg>

        <form class="dialog" role="dialog" aria-labelledby="dlg-title" @submit.prevent>
          <div class="dlg-title"><span id="dlg-title">放置约束</span><button type="button" aria-label="关闭"><svg class="i14" viewBox="0 0 14 14"><path d="M1 1l12 12M13 1L1 13" stroke="#111" stroke-width="1.200" /></svg></button></div>
          <div class="dlg-tabs"><button v-for="t in dialogTabs" :key="t" type="button" :class="{ active: t === activeDialogTab }" @click="activeDialogTab = t">{{ t }}</button></div>
          <div class="pane">
            <div class="row">
              <fieldset class="types">
                <legend>类型</legend>
                <div class="btns"><button v-for="t in types" :key="t.id" type="button" class="tool" :class="{ on: t.id === activeType }" :aria-label="t.label" @click="activeType = t.id"><svg class="i22"><use :href="'#' + t.id" /></svg></button></div>
              </fieldset>
              <fieldset class="picks">
                <legend>选择</legend>
                <div class="btns">
                  <button type="button" class="tool pick first"><span><svg class="cur"><use href="#cursor" /></svg>1</span></button>
                  <button type="button" class="tool pick second"><span><svg class="cur"><use href="#cursor" /></svg>2</span></button>
                  <label class="check end"><input v-model="pickFirst" type="checkbox" aria-label="先拾取零件" /><svg class="i17" viewBox="0 0 17 17"><path d="M2 5l4-3h9.500v8l-3 3M2 5h10v9H2zM12 5l3.500-3" fill="#fff" stroke="#e01818" stroke-width="1.800" /><path d="M6 6v10l2.200-2 1.500 3 1.500-1-1.300-3H13z" fill="#bbb" stroke="#111" /></svg></label>
                </div>
              </fieldset>
            </div>
            <div class="row">
              <div class="left">
                <label class="offset-label" for="offset">偏移量:</label>
                <div class="offset"><input id="offset" ref="offsetInput" v-model="offset" type="text" /><button type="button" aria-label="偏移量选项"><svg class="i8" viewBox="0 0 8 8"><path d="M2 0l4 4-4 4" fill="none" stroke="#444" stroke-width="2" /></svg></button></div>
                <div class="checks">
                  <label class="check"><input v-model="preview" type="checkbox" aria-label="显示预览" /><svg class="glasses" viewBox="0 0 36 20"><path d="M2 8C3 4 6 1 9 2M33 10c1-3 1-7 2-8M2 8h11M14 9h5M19 10h12" fill="none" stroke="#444" stroke-width="1.600" /><path d="M2 8h11v5c-1 3-9 3-11 0zM19 9h12v5c-2 3-10 3-12 0z" fill="#a9cccb" stroke="#3c4a4a" stroke-width="1.500" /></svg></label>
                  <label class="check"><input v-model="predict" type="checkbox" aria-label="预计偏移量和方向" /><svg class="i22" viewBox="0 0 22 22"><path d="M1 3h5v16H1z" fill="#cfe0f4" stroke="#1d3f7a" stroke-width="1.400" /><path d="M3 6h3M3 9h3M3 12h3M3 15h3" stroke="#1d3f7a" /><path d="M9 3h12v5h-5v11" fill="url(#gd)" stroke="#1d3f7a" stroke-width="1.200" /><path d="M9 11h6v7H9z" fill="#fff" stroke="#333" /><path d="M15.500 4v15" stroke="#d11" stroke-width="1.700" /></svg></label>
                </div>
              </div>
              <fieldset class="solution">
                <legend>求解方法</legend>
                <div class="btns">
                  <button type="button" class="tool tall" :class="{ on: solution === 'opposed' }" aria-label="配合" @click="solution = 'opposed'"><svg class="sol"><use href="#opposed" /></svg></button>
                  <button type="button" class="tool tall" :class="{ on: solution === 'aligned' }" aria-label="表面齐平" @click="solution = 'aligned'"><svg class="sol"><use href="#aligned" /></svg></button>
                </div>
              </fieldset>
            </div>
          </div>
          <div class="dlg-foot">
            <button type="button" class="icon-btn" aria-label="帮助"><svg class="i18"><use href="#help" /></svg></button>
            <button type="button" class="cmd first-cmd">确定</button>
            <button type="button" class="cmd">取消</button>
            <button type="submit" class="cmd default">应用</button>
            <button type="button" class="icon-btn last" aria-label="更多"><svg class="i14" viewBox="0 0 14 14"><path d="M1 2l5 5-5 5M8 2l5 5-5 5" fill="none" stroke="#222" /></svg></button>
          </div>
        </form>
      </section>
    </main>

    <footer class="status"><span class="hint">按 F1 获得帮助</span><span class="cell">5</span><span class="cell">4</span></footer>
  </div>
</template>

<style>
html, body, #app { height: 100%; }
body { margin: 0; overflow: hidden; }
</style>

<style scoped>
* { box-sizing: border-box; }
.app { display: flex; flex-direction: column; height: 100%; font: 15px/20px "Open Sans", "Noto Sans CJK SC", sans-serif; color: #333; background: #fff; }
.defs { position: absolute; }
button { display: flex; align-items: center; justify-content: center; padding: 0; border: 0; background: none; font: inherit; color: inherit; white-space: nowrap; }
svg { flex: none; display: block; }
.i8 { width: 8px; height: 8px; }
.i12 { width: 12px; height: 12px; }
.i14 { width: 14px; height: 14px; }
.i17 { width: 17px; height: 17px; }
.i18 { width: 18px; height: 18px; }
.i22 { width: 22px; height: 22px; }
.i24 { width: 24px; height: 24px; }
.i40 { width: 40px; height: 40px; }
.arrow { width: 10px; height: 6px; }
.arrow.small { width: 6px; height: 4px; }
.arrow.tiny { width: 5px; height: 3px; opacity: .6; }
.w15 { width: 15px; height: 27px; }
.w20 { width: 20px; height: 27px; }
.w28 { width: 28px; height: 27px; }
.w30 { width: 30px; height: 27px; }
.sep { width: 1px; height: 27px; margin: 0 4px; background: #c4c4c4; }
.wide-sep { margin: 0 7px; }

.top { display: flex; background: #a0a0a0; height: 51px; flex: none; }
.app-button { width: 40px; height: 40px; border: 1px solid #222; border-width: 0 2px 2px 0; background: linear-gradient(#dcdcdc, #8c8c8c); flex: none; }
.logo { width: 38px; height: 38px; }
.top-main { flex: 1; min-width: 0; display: flex; flex-direction: column; }
.titlebar { display: flex; height: 29px; background: #fff; }
.qat { display: flex; align-items: center; padding-left: 5px; border: solid #6a6a6a; border-width: 0 1px 2px 0; background: linear-gradient(#ececec, #b8b8b8); }
.combo { position: relative; height: 27px; width: 126px; }
.combo select { width: 100%; height: 100%; appearance: none; border: 1px solid #777; border-radius: 0; background: linear-gradient(#e9e9e9, #c6c6c6); padding: 0 6px; font: italic 15px/20px "Open Sans", "Noto Sans CJK SC", sans-serif; color: #8a8a8a; }
.combo .arrow { position: absolute; right: 3px; top: 11px; pointer-events: none; }
.fx { font: italic 700 20px/24px "Liberation Serif", serif; color: #444; }
.fx-x { font-size: 14px; padding-top: 8px; }
.doc-title { flex: 1; margin: 0; padding-left: 18px; font-size: 15px; line-height: 29px; font-weight: 400; text-align: center; color: #111; }
.infobar { display: flex; align-items: center; width: 572px; border: solid #6a6a6a; border-width: 0 1px 2px; background: linear-gradient(#ececec, #b8b8b8); }
.search { width: 226px; height: 21px; border: 1px solid #999; background: #fff; padding: 0 4px; }
.login { flex: 1; justify-content: flex-start; gap: 6px; padding-left: 4px; color: #111; }
.login .arrow { margin: 0 6px 0 auto; }
.window-buttons { display: flex; width: 235px; padding-left: 57px; }
.window-buttons button { width: 58px; height: 28px; }

.ribbon-tabs { display: flex; align-items: flex-end; padding-left: 14px; height: 22px; }
.ribbon-tabs button { height: 21px; padding: 0 12px 4px; }
.ribbon-tabs .active { background: linear-gradient(#e8e8e8, #fff); border-radius: 2px 2px 0 0; }
.ribbon-tabs .pill-tab { padding-left: 28px; }
.pill { width: 34px; height: 14px; }

.ribbon { display: flex; flex: none; height: 121px; border-top: 1px solid #fff; border-bottom: 2px solid #777; background: linear-gradient(#e6e6e6, #a0a0a0); }
.group { display: flex; flex-direction: column; background: #fff; border-right: 2px solid #c4c4c4; }
.g-parts { width: 112px; }
.g-position { width: 105px; }
.g-relation { width: 231px; }
.g-pattern { width: 75px; }
.g-tools { width: 94px; }
.g-work { width: 133px; }
.g-more { width: 49px; border-right: 0; }
.group-body { flex: 1; display: flex; align-items: flex-start; padding: 2px 2px 0; }
.group-body.center { justify-content: center; }
.group-title { display: flex; align-items: center; justify-content: center; gap: 8px; height: 22px; border-top: 1px solid #ccc; background: #f0f0f0; }
.big { flex-direction: column; justify-content: flex-start; width: 54px; height: 90px; padding-top: 3px; }
.big span { margin: 4px 0; }
.big.joint { width: 48px; }
.big.plane { width: 58px; }
.big.wide { width: 80px; }
.big.pressed { border: 1px solid #1a6fd0; padding-top: 2px; background: linear-gradient(#c4ddf5, #8fbdee); }
.stack { display: flex; flex-direction: column; gap: 1px; padding: 0 4px; }
.stack button { height: 30px; justify-content: flex-start; gap: 6px; }
.stack button:disabled { color: #b4b4b4; }
.g-parts .group-body { padding-left: 4px; }
.faded { opacity: .6; }
.after { margin-left: 4px; }
.more { width: 43px; height: 27px; gap: 8px; margin: 1px 0 0 1px; border: 1px solid #ccc; background: #f3f3f3; }

.work { flex: 1; display: flex; min-height: 0; }
.browser { display: flex; flex-direction: column; width: 246px; padding: 0 3px 31px 2px; background: #f0f0f0; border-right: 2px solid #777; border-bottom: 1px solid #999; flex: none; }
.grip-row { display: flex; align-items: center; height: 15px; gap: 4px; padding: 1px 1px 0; }
.grip { flex: 1; height: 5px; border: solid #999; border-width: 1px 1px 1px 0; background: #fff; }
.grip-row button { width: 10px; height: 12px; }
.browser-head { display: flex; align-items: center; justify-content: space-between; height: 29px; padding: 0 5px 0 9px; background: #ababab; }
.model { gap: 5px; font-size: 17px; font-weight: 700; color: #fff; }
.browser-tools { display: flex; align-items: flex-end; height: 27px; color: #111; }
.browser-tools button { height: 20px; }
.browser-tools .filter { width: 27px; height: 25px; padding-top: 5px; border-right: 1px solid #888; }
.browser-tools .view-select { gap: 2px; padding: 0 8px 0 11px; }
.view-select .arrow { margin-left: 12px; }
.tree { flex: 1; border: 1px solid #666; background: #fff; color: #000; }
.root { display: flex; align-items: center; gap: 4px; height: 20px; padding-left: 4px; }
.tree ul { margin: 0; padding: 0; list-style: none; }
.tree li { display: flex; align-items: center; height: 20px; padding-left: 2px; }
.expander svg { width: 18px; height: 20px; }
.tree li .i17 { margin: 0 3px 0 4px; }
.count { font: 13px/20px "Liberation Mono", monospace; }

.viewport { position: relative; flex: 1; min-width: 0; overflow: hidden; background: #fff; border-bottom: 1px solid #ddd; border-right: 1px solid #ccc; }
.scene { width: 100%; height: 100%; }
.mdi { position: absolute; top: 5px; right: 0; display: flex; gap: 6px; }
.viewcube { position: absolute; top: 48px; right: 11px; width: 90px; height: 90px; }
.navbar { position: absolute; top: 144px; right: 0; display: flex; flex-direction: column; align-items: center; width: 36px; height: 199px; border: 2px solid #bbb; border-radius: 5px; background: #f3f3f3; padding: 2px 0; }
.navbar button { flex-direction: column; gap: 6px; margin-bottom: 6px; }
.navbar .nav-end { align-self: flex-end; margin: 0 4px 11px 0; }
.navbar .nav-end:last-child { margin: 4px 4px 0 0; }
.navbar .nav-wheel { margin-bottom: 4px; gap: 9px; }
.navbar hr { width: 26px; margin: 0 0 4px; border: 0; border-top: 1px solid #bbb; }
.triad { position: absolute; left: 16px; bottom: 37px; width: 48px; height: 56px; }

.dialog { position: absolute; left: 125px; top: 53px; width: 452px; border: 1px solid #1a7fd8; background: #f0f0f0; box-shadow: 0 3px 14px rgba(0, 0, 0, .4); color: #000; }
.dlg-title { display: flex; align-items: center; justify-content: space-between; height: 37px; padding: 0 15px 0 9px; background: #fff; }
.dlg-tabs { display: flex; align-items: flex-end; height: 28px; padding-right: 4px; }
.dlg-tabs button { height: 22px; padding: 0 24px 0 5px; border: 1px solid #dcdcdc; border-left: 0; border-bottom: 0; background: #f0f0f0; }
.dlg-tabs button:last-child { padding-right: 4px; }
.dlg-tabs .active { position: relative; z-index: 1; height: 25px; margin-bottom: -1px; padding: 0 24px 2px 8px; background: #fff; }
.pane { margin-right: 4px; padding: 3px 7px 8px 10px; border: 1px solid #dcdcdc; border-left: 0; background: #fff; }
.row { display: flex; align-items: flex-start; justify-content: space-between; }
fieldset { margin: 0; min-width: 0; padding: 8px 8px 5px; border: 1px solid #dcdcdc; }
legend { margin: 0; padding: 0 3px; height: 20px; line-height: 20px; }
.types { width: 222px; padding-left: 12px; }
.picks { width: 200px; }
.solution { width: 231px; padding: 6px 8px 8px 22px; }
.picks legend, .types legend { margin-left: -2px; }
.types legend { margin-left: -6px; }
.solution legend { margin-left: -17px; }
.btns { display: flex; align-items: center; gap: 2px; }
.tool { width: 38px; height: 32px; border: 1px solid #adadad; background: #e1e1e1; }
.tool.on { border: 1px solid #005499; background: #cce4f7; }
.tool.tall { width: 98px; height: 39px; }
.sol { width: 56px; height: 32px; }
.pick { width: 42px; font: 15px/20px "Liberation Mono", monospace; }
.pick span { display: flex; align-items: center; gap: 6px; padding: 0 1px 0 0; border-bottom: 2px solid #2b8cff; }
.pick.second span { border-bottom-color: #86d86c; }
.cur { width: 10px; height: 15px; }
.check { display: flex; align-items: center; gap: 7px; }
.check.end { margin-left: auto; padding-right: 4px; }
input[type="checkbox"] { appearance: none; width: 16px; height: 16px; margin: 0; border: 1px solid #333; background: #fff; display: grid; place-items: center; }
input[type="checkbox"]:checked::before { content: ""; width: 10px; height: 5px; border: solid #333; border-width: 0 0 1px 1px; transform: rotate(-45deg) translate(1px, -1px); }
.left { width: 190px; padding-top: 5px; }
.offset-label { display: block; }
.offset { display: flex; height: 23px; border: 1px solid #0078d7; background: #fff; }
.offset input { flex: 1; min-width: 0; border: 0; outline: 0; padding: 0 2px; background: #fff; font: 13px/17px "Liberation Mono", monospace; }
.offset input::selection { background: #0078d7; color: #fff; }
.offset button { width: 18px; background: #f0f0f0; }
.checks { display: flex; align-items: center; gap: 22px; height: 24px; margin-top: 10px; }
.check .i22 { margin-left: -2px; }
.glasses { width: 36px; height: 20px; }
.dlg-foot { display: flex; gap: 8px; padding: 7px 3px 11px 1px; }
.dlg-foot button { height: 24px; border: 1px solid #adadad; background: #e1e1e1; }
.dlg-foot .cmd { width: 98px; }
.dlg-foot .first-cmd { margin-left: auto; }
.dlg-foot .default { border: 2px solid #0078d7; }
.icon-btn { width: 30px; }
.icon-btn.last { width: 32px; margin-left: 2px; }

.status { display: flex; flex: none; height: 32px; align-items: center; border-bottom: 1px solid #0c1a26; background: linear-gradient(#fff, #b0b0b0); color: #111; }
.hint { flex: 1; padding-top: 4px; }
.cell { width: 40px; height: 100%; padding: 2px 0 0 12px; line-height: 32px; border-left: 1px solid #ccc; }
</style>
